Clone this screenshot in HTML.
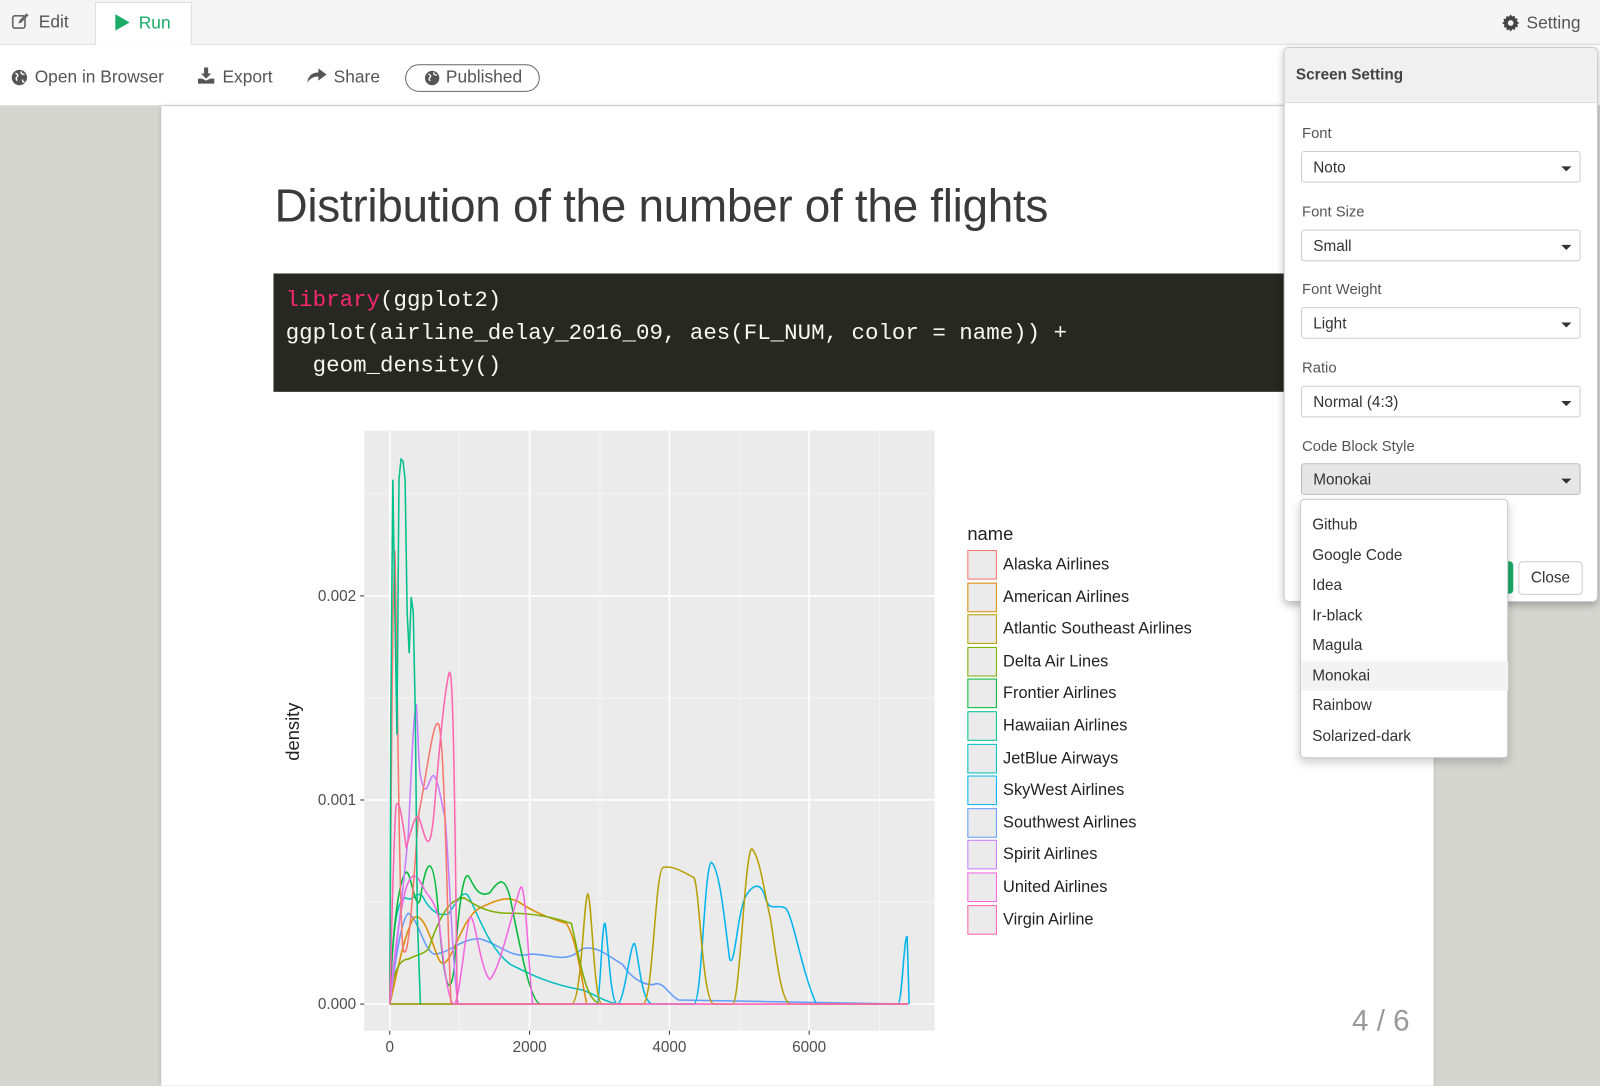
<!DOCTYPE html>
<html><head><meta charset="utf-8"><style>
html,body{margin:0;padding:0;width:1600px;height:1051px;overflow:hidden;background:#d6d6d1;}
#w{position:absolute;left:0;top:0;width:1568px;height:1030px;transform:scale(1.0204);transform-origin:0 0;font-family:"Liberation Sans",sans-serif;color:#444;}
.a{position:absolute;white-space:nowrap;}
.sel{position:absolute;left:16px;width:274px;height:31px;border:1px solid #ccc;border-radius:3px;box-sizing:border-box;background:#fff;font-size:15px;color:#333;padding:7px 0 0 11px;}
.sel:after{content:"";position:absolute;right:8px;top:14px;border-left:5px solid transparent;border-right:5px solid transparent;border-top:5px solid #333;}
.lab{position:absolute;left:17px;font-size:14.5px;color:#555;}
.it{position:absolute;left:0;width:203px;height:29px;font-size:15px;color:#333;padding-left:11px;box-sizing:border-box;line-height:29px;}
.lg{position:absolute;left:0;width:29px;height:29px;border:1.5px solid;background:#ebebeb;box-sizing:border-box;}
.lt{position:absolute;left:35px;font-size:16px;color:#222;}
</style></head><body><div id="w">
<div class="a" style="left:0;top:0;width:1568px;height:43px;background:#f5f5f5;border-bottom:1px solid #ddd;"></div>
<div class="a" style="left:93px;top:2px;width:95px;height:42px;background:#fff;border:1px solid #ddd;border-bottom:none;box-sizing:border-box;"></div>
<svg class="a" style="left:11px;top:12px" width="18" height="18" viewBox="0 0 18 18"><rect x="1.5" y="3.5" width="12" height="12" rx="2" fill="none" stroke="#666" stroke-width="1.6"/><path d="M7 11 L8 8 L15 1 L17 3 L10 10 Z" fill="#666"/></svg>
<div class="a" style="left:38px;top:12px;font-size:17px;color:#555;">Edit</div>
<svg class="a" style="left:112px;top:14px" width="16" height="16"><path d="M1 0 L15 8 L1 16Z" fill="#1aab66"/></svg>
<div class="a" style="left:136px;top:13px;font-size:17px;color:#1aab66;">Run</div>
<svg class="a" style="left:1472px;top:14px" width="17" height="17" viewBox="0 0 16 16"><path d="M8 0l1.3 2 2.3-.7.4 2.4 2.4.4-.7 2.3L16 8l-2 1.3.7 2.3-2.4.4-.4 2.4-2.3-.7L8 16l-1.3-2-2.3.7-.4-2.4-2.4-.4.7-2.3L0 8l2-1.3-.7-2.3 2.4-.4.4-2.4 2.3.7z" fill="#444"/><circle cx="8" cy="8" r="2.6" fill="#f5f5f5"/></svg>
<div class="a" style="left:1496px;top:13px;font-size:17px;color:#555;">Setting</div>
<div class="a" style="left:0;top:44px;width:1568px;height:59px;background:#fff;border-bottom:1px solid #ddd;"></div>
<svg class="a" style="left:11px;top:68px" width="16" height="16" viewBox="0 0 16 16"><circle cx="8" cy="8" r="7.5" fill="#555"/><path d="M4 4c2 0 3 2 2 3s-2 2 0 4M10 2c-1 2 1 3 3 3M11 10c0 2 1 3 2 2" stroke="#fff" stroke-width="1.4" fill="none"/></svg>
<div class="a" style="left:34px;top:66px;font-size:17px;color:#555;">Open in Browser</div>
<svg class="a" style="left:193px;top:66px" width="18" height="17" viewBox="0 0 18 17"><path d="M7 0h4v6h3l-5 5-5-5h3z" fill="#555"/><path d="M1 11h4l4 2 4-2h4v5H1z" fill="#555"/></svg>
<div class="a" style="left:218px;top:66px;font-size:17px;color:#555;">Export</div>
<svg class="a" style="left:301px;top:67px" width="19" height="15" viewBox="0 0 19 15"><path d="M11 0l8 6-8 6V8C6 8 3 10 0 14 1 8 4 4 11 4z" fill="#555"/></svg>
<div class="a" style="left:327px;top:66px;font-size:17px;color:#555;">Share</div>
<div class="a" style="left:397px;top:63px;width:132px;height:27px;border:1.5px solid #666;border-radius:14px;box-sizing:border-box;"></div>
<svg class="a" style="left:416px;top:69px" width="15" height="15" viewBox="0 0 16 16"><circle cx="8" cy="8" r="7.5" fill="#555"/><path d="M4 4c2 0 3 2 2 3s-2 2 0 4M10 2c-1 2 1 3 3 3" stroke="#fff" stroke-width="1.4" fill="none"/></svg>
<div class="a" style="left:437px;top:66px;font-size:17px;color:#555;">Published</div>
<div class="a" style="left:158px;top:104px;width:1247px;height:960px;background:#fff;box-shadow:0 0 4px rgba(0,0,0,.2);"></div>
<div class="a" style="left:269px;top:176px;font-size:45px;color:#3a3a3a;letter-spacing:-0.3px;">Distribution of the number of the flights</div>
<div class="a" style="left:268px;top:268px;width:1060px;height:116px;background:#272822;"></div>
<div class="a" style="left:280px;top:279px;font-family:'Liberation Mono',monospace;font-size:22px;line-height:32px;color:#f8f8f2;"><span style="color:#f92672">library</span>(ggplot2)<br>ggplot(airline_delay_2016_09, aes(FL_NUM, color = name)) +<br>&nbsp;&nbsp;geom_density()</div>
<svg class="a" style="left:0;top:0" width="1260" height="1045" font-family="Liberation Sans, sans-serif">
<rect x="357" y="422" width="559" height="588" fill="#ebebeb"/>
<g stroke="#f7f7f7" stroke-width="0.8"><line x1="450" y1="422" x2="450" y2="1010"/><line x1="588" y1="422" x2="588" y2="1010"/><line x1="725" y1="422" x2="725" y2="1010"/><line x1="862" y1="422" x2="862" y2="1010"/><line x1="357" y1="484" x2="916" y2="484"/><line x1="357" y1="684" x2="916" y2="684"/><line x1="357" y1="884" x2="916" y2="884"/></g>
<g stroke="#fff" stroke-width="1.6"><line x1="382" y1="422" x2="382" y2="1010"/><line x1="519" y1="422" x2="519" y2="1010"/><line x1="656" y1="422" x2="656" y2="1010"/><line x1="793" y1="422" x2="793" y2="1010"/><line x1="357" y1="584" x2="916" y2="584"/><line x1="357" y1="784" x2="916" y2="784"/><line x1="357" y1="984" x2="916" y2="984"/></g>
<g stroke="#333" stroke-width="1"><line x1="353" y1="584" x2="357" y2="584"/><line x1="353" y1="784" x2="357" y2="784"/><line x1="353" y1="984" x2="357" y2="984"/><line x1="382" y1="1010" x2="382" y2="1014"/><line x1="519" y1="1010" x2="519" y2="1014"/><line x1="656" y1="1010" x2="656" y2="1014"/><line x1="793" y1="1010" x2="793" y2="1014"/></g>
<g font-size="15" fill="#4d4d4d" text-anchor="end"><text x="349" y="589">0.002</text><text x="349" y="789">0.001</text><text x="349" y="989">0.000</text></g>
<g font-size="15" fill="#4d4d4d" text-anchor="middle"><text x="382" y="1031">0</text><text x="519" y="1031">2000</text><text x="656" y="1031">4000</text><text x="793" y="1031">6000</text></g>
<text x="293" y="717" font-size="18" fill="#222" text-anchor="middle" transform="rotate(-90 293 717)">density</text>
<g fill="none" stroke-width="1.5">
<path stroke="#619CFF" d="M382,984 C390,920 395,900 400,895 C410,900 415,930 425,935 C440,935 450,920 470,920 C490,925 500,940 520,935 C540,935 555,945 570,930 C585,925 600,940 610,945 C620,960 630,965 640,965 C650,960 655,975 665,980 L890,984"/>
<path stroke="#00BFC4" d="M382,984 C385,900 390,880 398,880 C405,885 410,870 415,880 C420,890 430,900 440,895 C450,880 455,870 460,880 C470,900 480,930 500,945 C520,955 540,965 570,970 C585,975 595,984 610,984"/>
<path stroke="#00B4F0" d="M382,984 L585,984 C588,984 590,900 593,905 C596,920 598,984 605,984 C612,984 618,920 622,925 C626,935 628,984 640,984 L680,984 C688,984 690,850 697,845 C705,850 710,900 715,940 C720,950 722,900 730,880 C735,870 745,860 750,880 C755,895 760,885 770,890 C778,900 785,950 800,984 L880,984 C884,984 886,915 889,918 L891,984"/>
<path stroke="#B79F00" d="M382,984 L560,984 C570,984 572,880 576,876 C580,880 582,984 590,984 L630,984 C640,984 642,850 650,850 C660,848 670,855 680,860 C686,870 688,984 700,984 L718,984 C725,984 730,830 737,832 C745,840 750,880 755,900 C760,930 765,984 775,984 L890,984"/>
<path stroke="#DE8C00" d="M382,984 C390,950 395,920 405,900 C415,890 425,930 430,940 C440,960 450,900 470,890 C490,880 500,878 510,885 C525,895 540,900 555,905 C565,920 570,960 575,984"/>
<path stroke="#7CAE00" d="M382,984 C385,950 392,940 400,940 C410,935 415,935 420,930 C430,900 440,880 455,880 C470,890 480,895 500,895 C520,895 540,898 560,905 C570,950 575,984 590,984"/>
<path stroke="#00BA38" d="M382,984 C385,900 392,860 398,855 C402,850 408,900 412,880 C418,840 425,830 430,900 C435,960 440,984 445,950 C450,880 455,850 460,860 C465,870 470,880 480,875 C490,860 495,860 500,880 C510,930 520,984 530,984"/>
<path stroke="#F564E3" d="M382,984 C385,950 390,900 398,870 C405,850 410,860 415,870 C420,880 425,880 430,900 C435,950 440,984 445,984 C450,984 455,920 460,900 C465,890 470,950 480,960 C490,950 500,900 510,870 C515,860 518,950 522,984"/>
<path stroke="#C77CFF" d="M382,984 C385,960 392,900 400,820 C403,760 405,700 408,690 C410,720 410,750 412,760 C418,790 420,760 425,760 C430,765 433,790 436,800 C440,840 445,984 450,984"/>
<path stroke="#F8766D" d="M382,984 C383,800 385,540 387,540 C389,600 391,900 395,930 C400,950 405,870 410,800 C418,760 425,700 430,710 C436,730 438,900 442,984"/>
<path stroke="#00C08B" d="M382,984 L383,700 L385,470 L387,600 L389,720 L391,470 L393,450 L395,452 L397,470 L399,600 L401,640 L403,585 L405,600 L407,700 L409,900 L412,984"/>
<path stroke="#FF64B0" d="M382,984 C384,900 386,820 388,790 C391,780 394,800 398,830 C402,820 405,800 410,800 C415,810 420,850 425,800 C430,740 435,680 440,660 C443,650 445,700 448,984 L890,984"/>
</g>
</svg>
<div class="a" style="left:948px;top:513px;font-size:18px;color:#222;">name</div>
<div class="a" style="left:948px;top:539px;width:260px;height:400px;">
<div class="lg" style="top:0;border-color:#F8766D"></div><div class="lt" style="top:6px">Alaska Airlines</div>
<div class="lg" style="top:31.6px;border-color:#DE8C00"></div><div class="lt" style="top:37.6px">American Airlines</div>
<div class="lg" style="top:63.2px;border-color:#B79F00"></div><div class="lt" style="top:69.2px">Atlantic Southeast Airlines</div>
<div class="lg" style="top:94.8px;border-color:#7CAE00"></div><div class="lt" style="top:100.8px">Delta Air Lines</div>
<div class="lg" style="top:126.4px;border-color:#00BA38"></div><div class="lt" style="top:132.4px">Frontier Airlines</div>
<div class="lg" style="top:158px;border-color:#00C08B"></div><div class="lt" style="top:164px">Hawaiian Airlines</div>
<div class="lg" style="top:189.6px;border-color:#00BFC4"></div><div class="lt" style="top:195.6px">JetBlue Airways</div>
<div class="lg" style="top:221.2px;border-color:#00B4F0"></div><div class="lt" style="top:227.2px">SkyWest Airlines</div>
<div class="lg" style="top:252.8px;border-color:#619CFF"></div><div class="lt" style="top:258.8px">Southwest Airlines</div>
<div class="lg" style="top:284.4px;border-color:#C77CFF"></div><div class="lt" style="top:290.4px">Spirit Airlines</div>
<div class="lg" style="top:316px;border-color:#F564E3"></div><div class="lt" style="top:322px">United Airlines</div>
<div class="lg" style="top:347.6px;border-color:#FF64B0"></div><div class="lt" style="top:353.6px">Virgin Airline</div>
</div>
<div class="a" style="left:1325px;top:985px;font-size:29px;color:#999;">4 / 6</div>
<div class="a" style="left:1258px;top:46px;width:306px;height:542px;background:#fff;border:1px solid #ccc;border-radius:5px;box-shadow:0 3px 8px rgba(0,0,0,.25);overflow:hidden;">
<div class="a" style="left:0;top:0;width:306px;height:53px;background:#f0f0f0;border-bottom:1px solid #ddd;"></div>
<div class="a" style="left:11px;top:18px;font-size:15px;font-weight:bold;color:#444;">Screen Setting</div>
<div class="lab" style="top:76px">Font</div><div class="sel" style="top:101px">Noto</div>
<div class="lab" style="top:153px">Font Size</div><div class="sel" style="top:178px">Small</div>
<div class="lab" style="top:229px">Font Weight</div><div class="sel" style="top:254px">Light</div>
<div class="lab" style="top:306px">Ratio</div><div class="sel" style="top:331px">Normal (4:3)</div>
<div class="lab" style="top:383px">Code Block Style</div><div class="sel" style="top:407px;background:#e6e6e6;border-color:#bbb;">Monokai</div>
<div class="a" style="left:200px;top:503px;width:24px;height:32px;background:#1aab66;border-radius:4px;"></div>
<div class="a" style="left:229px;top:503px;width:63px;height:33px;border:1px solid #ccc;border-radius:4px;box-sizing:border-box;background:#fff;font-size:15px;color:#333;text-align:center;line-height:31px;">Close</div>
</div>
<div class="a" style="left:1274px;top:489px;width:204px;height:254px;background:#fff;border:1px solid #ccc;border-radius:4px;box-shadow:0 4px 10px rgba(0,0,0,.2);box-sizing:border-box;">
<div class="it" style="top:10px">Github</div>
<div class="it" style="top:39.5px">Google Code</div>
<div class="it" style="top:69px">Idea</div>
<div class="it" style="top:98.5px">Ir-black</div>
<div class="it" style="top:128px">Magula</div>
<div class="it" style="top:157.5px;background:#f3f3f3">Monokai</div>
<div class="it" style="top:187px">Rainbow</div>
<div class="it" style="top:216.5px">Solarized-dark</div>
</div>
</div></body></html>
